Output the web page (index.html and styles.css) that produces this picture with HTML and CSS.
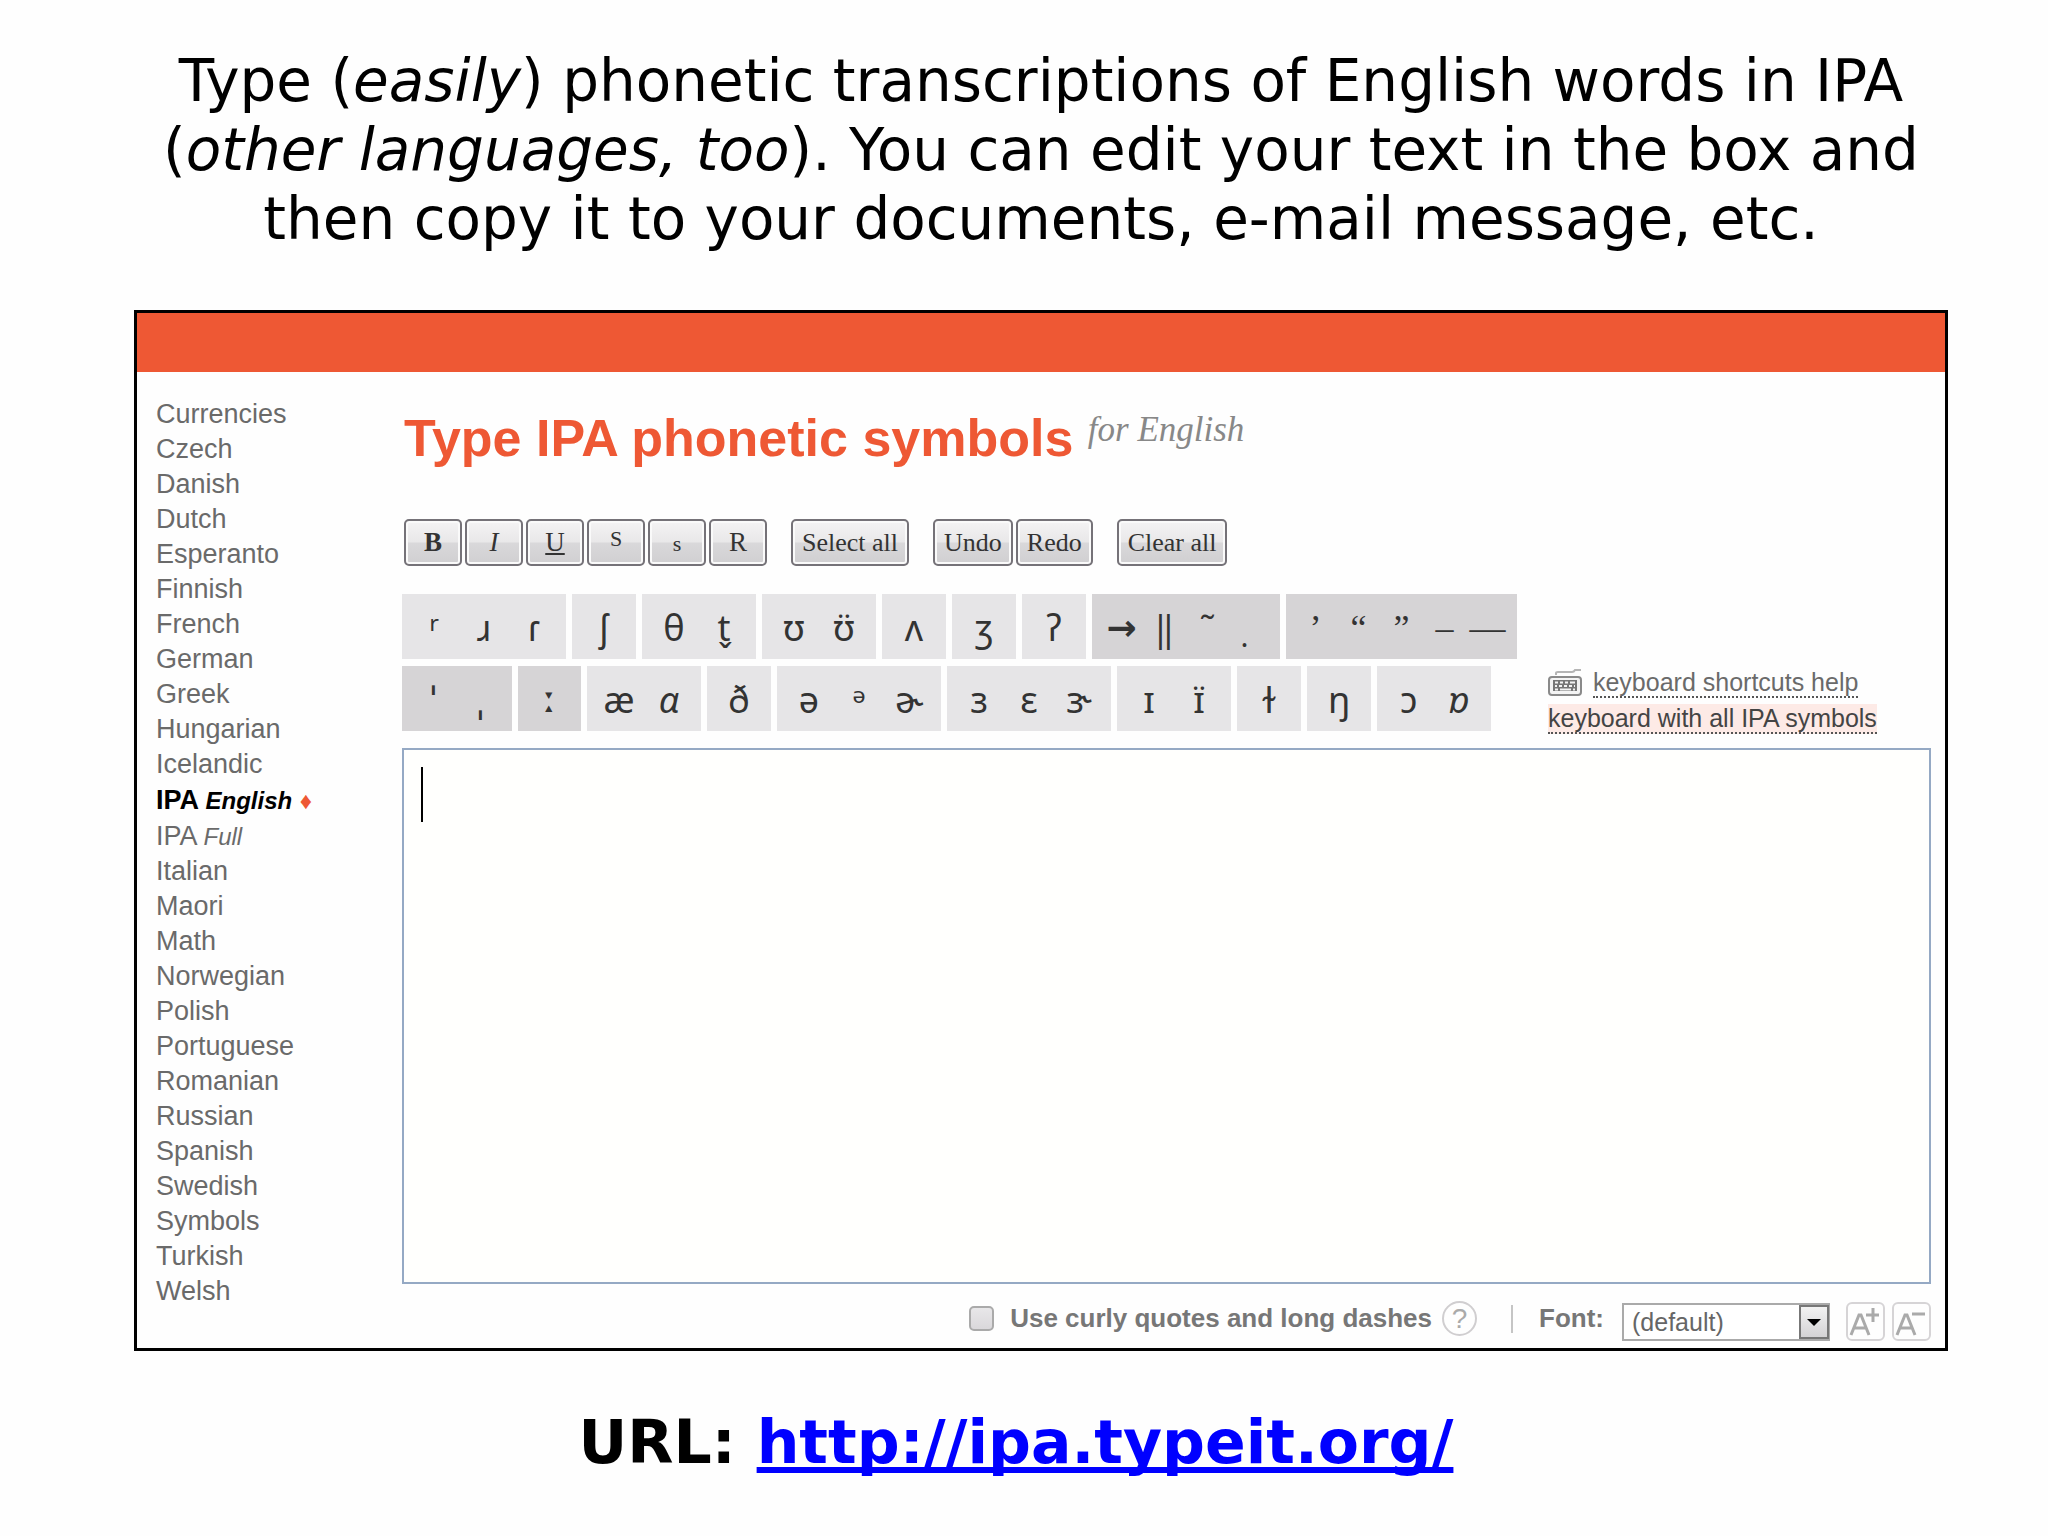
FILE: index.html
```html
<!DOCTYPE html>
<html lang="en">
	<head>
		<meta charset="UTF-8" />
		<meta name="viewport" content="width=device-width, initial-scale=1.0" />
		<title>Type IPA phonetic symbols</title>
		<link rel="stylesheet" href="styles.css">
	</head>
	<body>
		<p class="intro">
			Type (<em>easily</em>) phonetic transcriptions of English words in IPA
			<br />(<em>other languages, too</em>). You can edit your text in the box and
			<br />then copy it to your documents, e-mail message, etc.
		</p>

		<main class="panel">
			<div class="topbar"></div>
			<div class="content">
				<nav class="languages">
					<a href="#">Currencies</a>
					<a href="#">Czech</a>
					<a href="#">Danish</a>
					<a href="#">Dutch</a>
					<a href="#">Esperanto</a>
					<a href="#">Finnish</a>
					<a href="#">French</a>
					<a href="#">German</a>
					<a href="#">Greek</a>
					<a href="#">Hungarian</a>
					<a href="#">Icelandic</a>
					<a href="#" class="current">IPA <em>English</em> <span class="mark">♦</span></a>
					<a href="#">IPA <em>Full</em></a>
					<a href="#">Italian</a>
					<a href="#">Maori</a>
					<a href="#">Math</a>
					<a href="#">Norwegian</a>
					<a href="#">Polish</a>
					<a href="#">Portuguese</a>
					<a href="#">Romanian</a>
					<a href="#">Russian</a>
					<a href="#">Spanish</a>
					<a href="#">Swedish</a>
					<a href="#">Symbols</a>
					<a href="#">Turkish</a>
					<a href="#">Welsh</a>
				</nav>

				<section class="editor">
					<h1>Type IPA phonetic symbols <small>for English</small></h1>

					<div class="toolbar">
						<div class="tools">
							<button class="btn"><b>B</b></button>
							<button class="btn"><i>I</i></button>
							<button class="btn"><u>U</u></button>
							<button class="btn"><span class="sup">S</span></button>
							<button class="btn"><span class="sub">s</span></button>
							<button class="btn">R</button>
						</div>
						<button class="btn wide">Select all</button>
						<div class="tools">
							<button class="btn wide">Undo</button>
							<button class="btn wide">Redo</button>
						</div>
						<button class="btn wide">Clear all</button>
					</div>

					<div class="keyboard">
						<div class="rows">
							<div class="row">
								<div class="keys"><button>ʳ</button><button>ɹ</button><button>ɾ</button></div>
								<div class="keys"><button>ʃ</button></div>
								<div class="keys"><button>θ</button><button>t̬</button></div>
								<div class="keys"><button>ʊ</button><button>ʊ̈</button></div>
								<div class="keys"><button>ʌ</button></div>
								<div class="keys"><button>ʒ</button></div>
								<div class="keys"><button>ʔ</button></div>
								<div class="keys dark"><button class="heavy">→</button><button>‖</button><button>˜</button><button>&nbsp;&#x323;</button></div>
								<div class="keys dark punctuation"><button>’</button><button>“</button><button>”</button><button>–</button><button>—</button></div>
							</div>
							<div class="row">
								<div class="keys dark stress"><button>ˈ</button><button>ˌ</button></div>
								<div class="keys dark stress"><button class="heavy">ː</button></div>
								<div class="keys"><button>æ</button><button><i>ɑ</i></button></div>
								<div class="keys"><button>ð</button></div>
								<div class="keys"><button>ə</button><button>ᵊ</button><button>ɚ</button></div>
								<div class="keys"><button>ɜ</button><button>ɛ</button><button>ɝ</button></div>
								<div class="keys"><button>ɪ</button><button>ɪ̈</button></div>
								<div class="keys"><button>ɫ</button></div>
								<div class="keys"><button>ŋ</button></div>
								<div class="keys"><button>ɔ</button><button><i>ɒ</i></button></div>
							</div>
						</div>
						<div class="links">
							<div>
								<svg width="34" height="28" viewBox="0 0 34 28" fill="none" stroke="#8a8a8a">
									<path d="M8 6 V4 Q8 3 10 3 H24 Q26 3 27 1 H33" stroke="#b5b5b5" stroke-width="2" />
									<rect x="1" y="8" width="32" height="18" rx="3" fill="#f4f4f4" stroke-width="2" />
									<rect x="5" y="11" width="24" height="11" fill="#777" stroke="none" />
									<path d="M7 13.500h3m2 0h3m2 0h3m2 0h5M7 17h2m2 0h3m2 0h3m2 0h3m2 0h1M7 20.500h3m2 0h11m2 0h2" stroke="#f4f4f4" stroke-width="2" />
								</svg>
								<a href="#">keyboard shortcuts help</a>
							</div>
							<div><a href="#" class="full">keyboard with all IPA symbols</a></div>
						</div>
					</div>

					<div class="box">
						<textarea aria-label="Your text"></textarea>
						<span class="caret"></span>
					</div>

					<div class="options">
						<div class="settings">
							<label class="curly"><input type="checkbox" />Use curly quotes and long dashes</label>
							<button class="help" aria-label="Help">?</button>
							<span class="divider"></span>
							<label for="font">Font:</label>
						</div>
						<div class="select">
							<select id="font"><option>(default)</option></select>
							<span class="arrow"></span>
						</div>
						<button class="size" aria-label="Larger text">
							<svg width="34" height="36" viewBox="0 0 34 36" fill="none" stroke="#aaa" stroke-width="3">
								<path d="M3 31 L11 11 H13 L21 31 M6 24 H18 M18 11 H31 M25 4 V18" />
							</svg>
						</button>
						<button class="size" aria-label="Smaller text">
							<svg width="34" height="36" viewBox="0 0 34 36" fill="none" stroke="#aaa" stroke-width="3">
								<path d="M3 31 L11 11 H13 L21 31 M6 24 H18 M18 10 H31" />
							</svg>
						</button>
					</div>
				</section>
			</div>
		</main>

		<p class="url">URL: <a href="http://ipa.typeit.org/">http://ipa.typeit.org/</a></p>
	</body>
</html>
```
FILE: styles.css
```css
* {
	margin: 0;
	padding: 0;
	box-sizing: border-box;
}

body {
	background: #fefefe;
	color: #000;
	font-family: "Liberation Sans", Arial, sans-serif;
	padding: 47px 0 0;
}

button,
select,
textarea {
	font: inherit;
	color: inherit;
}

button {
	cursor: pointer;
}

.intro {
	margin: 0 100px 56px 134px;
	font-family: "DejaVu Sans", Verdana, sans-serif;
	font-size: 58px;
	line-height: 69px;
	text-align: center;
}

.panel {
	margin: 0 100px 0 134px;
	border: 3px solid #000;
}

.topbar {
	height: 59px;
	background: #ee5834;
}

.content {
	display: flex;
	padding: 0 14px 7px 19px;
}

.languages {
	width: 246px;
	flex-shrink: 0;
	padding-top: 25px;
	display: flex;
	flex-direction: column;
	font-size: 27px;
	line-height: 35px;
}

.languages a {
	color: #6a6a6a;
	text-decoration: none;
}

.languages em {
	font-size: 24px;
}

.languages .current {
	color: #000;
	font-weight: bold;
	line-height: 37px;
}

.mark {
	color: #ee5834;
	font-size: 24px;
}

.editor {
	flex: 1;
	min-width: 0;
}

h1 {
	padding: 34px 0 0 2px;
	color: #ee5834;
	font-size: 52px;
	line-height: 64px;
}

h1 small {
	color: #888;
	font: italic 35px "Liberation Serif", Georgia, serif;
	vertical-align: 15px;
}

.toolbar {
	display: flex;
	gap: 24px;
	margin: 49px 0 28px 2px;
}

.tools {
	display: flex;
	gap: 3px;
}

.btn {
	width: 58px;
	height: 47px;
	border: 2px solid #757278;
	border-radius: 5px;
	background: linear-gradient(#f4f3f4, #e9e8e9 48%, #d9d8da 52%, #d0cfd1);
	box-shadow: inset 0 0 0 2px #fafafa;
	color: #333;
	font: 27px "Liberation Serif", "Times New Roman", serif;
}

.btn.wide {
	width: auto;
	padding: 0 9px;
	font-size: 26px;
}

.sup,
.sub {
	font-size: 22px;
}

.sup {
	vertical-align: 6px;
}

.keyboard {
	display: flex;
	justify-content: space-between;
}

.rows {
	display: flex;
	flex-direction: column;
	gap: 7px;
}

.row {
	display: flex;
	gap: 6px;
}

.keys {
	display: flex;
	height: 65px;
	padding: 2px 7px 0;
	background: #e6e5e7;
}

.keys button {
	width: 50px;
	border: none;
	background: none;
	color: #333;
	font: 36px "Noto Sans", "DejaVu Sans", sans-serif;
}

.keys.dark {
	padding: 2px 8px 0;
	background: #d6d4d6;
}

.keys.dark button {
	width: 43px;
}

.keys.stress button {
	width: 47px;
}

.keys.punctuation button {
	font-family: "Liberation Serif", serif;
}

.keys .heavy {
	font-family: "DejaVu Sans", sans-serif;
	font-weight: bold;
}

.links {
	width: 383px;
	padding-top: 70px;
	color: #6a6a6a;
	font-size: 25px;
	line-height: 36px;
}

.links svg {
	margin-right: 4px;
	vertical-align: -6px;
}

.links a {
	border-bottom: 2px dotted #555;
	color: #6a6a6a;
	text-decoration: none;
}

.links .full {
	background: #fdeae6;
	color: #444;
}

.box {
	position: relative;
	margin-top: 12px;
}

.box textarea {
	display: block;
	width: 100%;
	height: 536px;
	padding: 16px 18px;
	border: 2px solid #95a9c4;
	outline: none;
	resize: none;
	background: #fffffd;
	font-size: 48px;
}

.caret {
	position: absolute;
	left: 19px;
	top: 19px;
	width: 2px;
	height: 55px;
	background: #000;
}

.options {
	display: flex;
	align-items: center;
	justify-content: flex-end;
	height: 57px;
	padding-top: 18px;
	color: #777;
	font-size: 26px;
}

.settings {
	display: flex;
	align-items: center;
	padding-bottom: 6px;
	font-weight: bold;
}

.curly {
	display: flex;
	align-items: center;
	gap: 16px;
}

.curly input {
	appearance: none;
	width: 25px;
	height: 25px;
	border: 2px solid #aaa;
	border-radius: 5px;
	background: linear-gradient(#e8e7e9, #dad8db);
}

.help {
	width: 35px;
	height: 35px;
	margin: 0 34px 0 10px;
	border: 2px solid #d0ced0;
	border-radius: 50%;
	background: none;
	color: #aaa;
	font-size: 28px;
	font-weight: normal;
	line-height: 30px;
}

.divider {
	width: 2px;
	height: 28px;
	margin-right: 26px;
	background: #c5c5c5;
}

.select {
	position: relative;
	margin: 0 16px 0 18px;
}

.select select {
	display: block;
	appearance: none;
	width: 208px;
	height: 38px;
	padding-left: 8px;
	border: 2px solid #aaa;
	border-radius: 0;
	background: #fff;
	color: #666;
	font-size: 25px;
}

.arrow {
	position: absolute;
	top: 2px;
	right: 1px;
	width: 30px;
	height: 34px;
	border: 2px solid #777;
	background: linear-gradient(#f2f2f2, #d4d3d5);
	pointer-events: none;
}

.arrow::after {
	content: "";
	position: absolute;
	left: 6px;
	top: 12px;
	border: 7px solid transparent;
	border-top-color: #000;
	border-bottom: none;
}

.size {
	width: 39px;
	height: 39px;
	border: 2px solid #d6d4d6;
	border-radius: 6px;
	background: none;
}

.size svg {
	display: block;
}

.size + .size {
	margin-left: 7px;
}

.url {
	margin: 57px 16px 0 0;
	font-family: "DejaVu Sans", Verdana, sans-serif;
	font-size: 60px;
	font-weight: bold;
	line-height: 69px;
	text-align: center;
}

.url a {
	color: #00f;
	text-decoration-thickness: 6px;
	text-decoration-skip-ink: none;
	text-underline-offset: 4px;
}
```
